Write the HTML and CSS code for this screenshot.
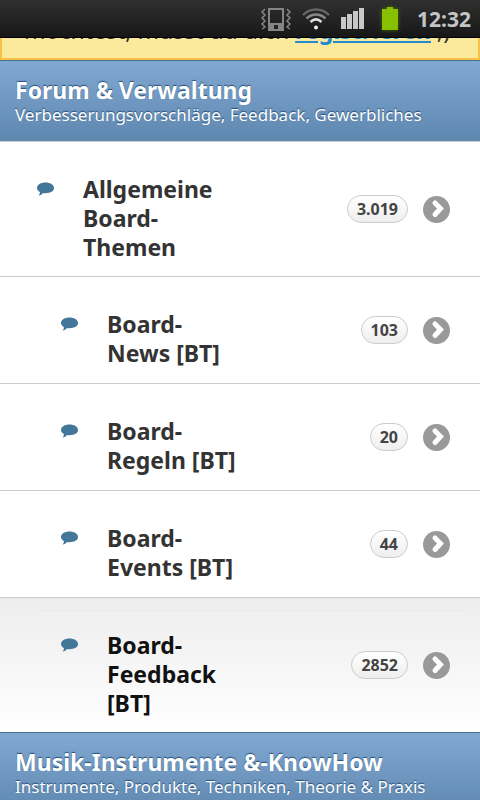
FILE: index.html
```html
<!DOCTYPE html>
<html lang="de">
<head>
  <meta charset="UTF-8">
  <meta name="viewport" content="width=device-width, initial-scale=1.0">
  <title>Forum</title>
  <link rel="stylesheet" href="styles.css">
</head>
<body>
  <svg class="sprite" aria-hidden="true">
    <symbol id="bubble" viewBox="0 0 17 14">
      <path d="M8.5 0.5C13 0.5 17 2.6 17 6C17 9.4 13 11.2 8.500 11.200C7.600 11.200 6.800 11.200 6 11C5 12.500 3.500 13.400 1.500 13.600C2.500 12.600 3 11.400 2.900 10C1.200 9 0 7.700 0 6C0 2.600 4 0.500 8.500 0.500Z" fill="#437799"/>
    </symbol>
    <symbol id="arrow" viewBox="0 0 27 27">
      <circle cx="13.500" cy="13.500" r="13.500" fill="#999"/>
      <path d="M12 7L17.500 12.500L12 18.500" fill="none" stroke="#fff" stroke-width="5" stroke-linecap="round"/>
    </symbol>
  </svg>

  <div class="statusbar">
    <svg width="30" height="24" viewBox="0 0 30 24" fill="none">
      <path d="M7 1H23V24H7ZM9 3V16H21V3Z" fill="#858585" fill-rule="evenodd"/>
      <rect x="13" y="18" width="4" height="4" fill="#222"/>
      <path d="M4 2L1 5L4 8L1 11L4 14L1 17L4 20L1 22M26 2L29 5L26 8L29 11L26 14L29 17L26 20L29 22" stroke="#858585" stroke-width="1.500"/>
    </svg>
    <svg width="28" height="22" viewBox="0 0 28 22" fill="none" stroke-width="2.500">
      <path d="M1 7C8 -0.500 20 -0.500 27 7" stroke="#666"/>
      <path d="M4.500 10.500C10 5 18 5 23.500 10.500" stroke="#888"/>
      <path d="M8.500 14C12 10.500 16 10.500 19.500 14" stroke="#ddd"/>
      <circle cx="14" cy="19.500" r="2" fill="#eee"/>
    </svg>
    <svg width="24" height="21" viewBox="0 0 24 21" fill="#c8c8c8">
      <path d="M0 9H5V21H0ZM6 6H11V21H6ZM12 3H17V21H12ZM18 0H23V21H18Z"/>
    </svg>
    <svg class="battery" width="16" height="23" viewBox="0 0 16 23">
      <path d="M5 0H11V2H16V23H0V2H5Z" fill="#86c000"/>
    </svg>
    <span class="clock">12:32</span>
  </div>

  <div class="notice">
    <p>möchtest, musst du dich <a href="#">registrieren</a> ;)</p>
  </div>

  <div class="category">
    <h2>Forum &amp; Verwaltung</h2>
    <p>Verbesserungsvorschläge, Feedback, Gewerbliches</p>
  </div>

  <ul class="forums">
    <li>
      <a class="forum" href="#">
        <svg class="bubble"><use href="#bubble"/></svg>
        <span class="title">Allgemeine Board-Themen</span>
        <span class="side"><span class="count">3.019</span><svg class="arrow"><use href="#arrow"/></svg></span>
      </a>
    </li>
    <li>
      <a class="forum sub" href="#">
        <svg class="bubble"><use href="#bubble"/></svg>
        <span class="title">Board-News [BT]</span>
        <span class="side"><span class="count">103</span><svg class="arrow"><use href="#arrow"/></svg></span>
      </a>
    </li>
    <li>
      <a class="forum sub" href="#">
        <svg class="bubble"><use href="#bubble"/></svg>
        <span class="title">Board-Regeln [BT]</span>
        <span class="side"><span class="count">20</span><svg class="arrow"><use href="#arrow"/></svg></span>
      </a>
    </li>
    <li>
      <a class="forum sub" href="#">
        <svg class="bubble"><use href="#bubble"/></svg>
        <span class="title">Board-Events [BT]</span>
        <span class="side"><span class="count">44</span><svg class="arrow"><use href="#arrow"/></svg></span>
      </a>
    </li>
    <li>
      <a class="forum sub active" href="#">
        <svg class="bubble"><use href="#bubble"/></svg>
        <span class="title">Board-Feedback [BT]</span>
        <span class="side"><span class="count">2852</span><svg class="arrow"><use href="#arrow"/></svg></span>
      </a>
    </li>
  </ul>

  <div class="category">
    <h2>Musik-Instrumente &amp;-KnowHow</h2>
    <p>Instrumente, Produkte, Techniken, Theorie &amp; Praxis</p>
  </div>
</body>
</html>
```
FILE: styles.css
```css
* {
  box-sizing: border-box;
}
body {
  margin: 0;
  background: #fff;
  color: #333;
  font-family: "Noto Sans", "Open Sans", sans-serif;
  overflow: hidden;
}
h2, p, ul {
  margin: 0;
  padding: 0;
}
.sprite {
  display: none;
}

/* status bar */
.statusbar {
  display: flex;
  align-items: center;
  justify-content: flex-end;
  gap: 11px;
  height: 38px;
  padding-right: 9px;
  background: linear-gradient(#303030, #171717);
  border-bottom: 1px solid #000;
}
.battery {
  margin-left: 6px;
  filter: drop-shadow(0 0 2px #4a6a00);
}
.clock {
  margin-left: 8px;
  color: #c4c4c4;
  font-size: 21px;
  font-weight: bold;
}

/* scrolled notice */
.notice {
  display: flex;
  align-items: flex-end;
  height: 22px;
  padding: 0 22px 14px;
  overflow: hidden;
  background: #fbe99c;
  border: 2px solid #f7c243;
  border-top: 0;
}
.notice p {
  font-size: 23px;
  line-height: 28px;
  white-space: nowrap;
}
.notice a {
  color: #2489ce;
  font-weight: bold;
}

/* category bars */
.category {
  padding: 15px;
  background: linear-gradient(#81a8d0, #5e87b0);
  border-top: 1px solid #456f9a;
  border-bottom: 1px solid #ccc;
  color: #fff;
  text-shadow: 0 -1px 1px #254f7a;
}
.category h2 {
  font-size: 23px;
  line-height: 28px;
  white-space: nowrap;
}
.category p {
  font-size: 17px;
  line-height: 22px;
  white-space: nowrap;
}

/* forum list */
.forums {
  list-style: none;
}
.forum {
  display: flex;
  align-items: flex-start;
  min-height: 107px;
  padding: 14px 30px 14px 37px;
  border-bottom: 1px solid #ccc;
  color: #333;
  text-decoration: none;
}
.forum.sub {
  padding-left: 61px;
}
.forum.active {
  background:
    linear-gradient(#f4f4f4, #f4f4f4) 39px 15px / calc(100% - 54px) 1px no-repeat,
    linear-gradient(#ededed, #fff);
  border-bottom: 0;
  color: #111;
}
.bubble {
  flex: none;
  width: 17px;
  height: 14px;
  margin: 26px 29px 0 0;
}
.title {
  flex: 1;
  margin-top: 19px;
  font-size: 23px;
  font-weight: bold;
  line-height: 29px;
}
.side {
  display: flex;
  flex: none;
  align-items: center;
  align-self: center;
  justify-content: flex-end;
  gap: 15px;
  width: 208px;
}
.count {
  padding: 0 9px;
  border: 1px solid #ccc;
  border-radius: 14px;
  background: linear-gradient(#fff, #eee);
  color: #444;
  font-size: 16px;
  font-weight: bold;
  line-height: 26px;
}
.arrow {
  width: 27px;
  height: 27px;
}
```
